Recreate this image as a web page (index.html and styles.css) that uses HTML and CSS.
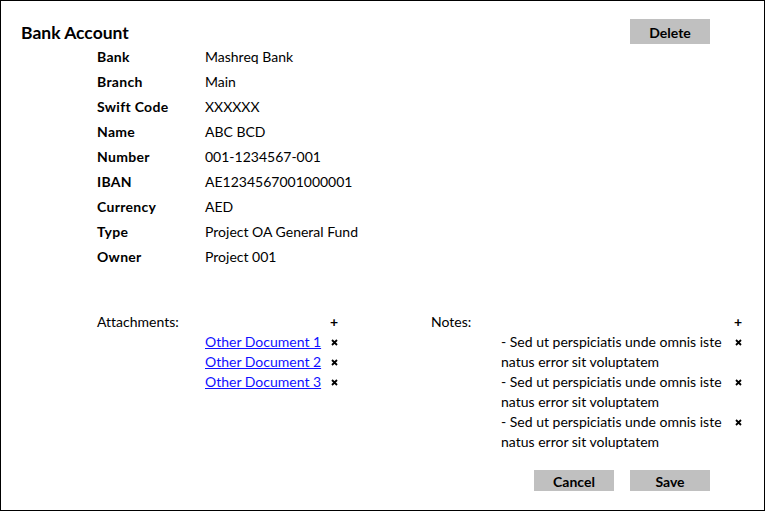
FILE: index.html
```html
<!DOCTYPE html>
<html>
<head>
<meta charset="utf-8">
<link rel="stylesheet" href="styles.css">
</head>
<body>
<div class="frame">
  <div class="header">
    <h1 class="title">Bank Account</h1>
    <button class="btn">Delete</button>
  </div>
  <div class="details">
    <div class="label">Bank</div><div class="value">Mashreq Bank</div>
    <div class="label">Branch</div><div class="value">Main</div>
    <div class="label">Swift Code</div><div class="value">XXXXXX</div>
    <div class="label">Name</div><div class="value">ABC BCD</div>
    <div class="label">Number</div><div class="value">001-1234567-001</div>
    <div class="label">IBAN</div><div class="value">AE1234567001000001</div>
    <div class="label">Currency</div><div class="value">AED</div>
    <div class="label">Type</div><div class="value">Project OA General Fund</div>
    <div class="label">Owner</div><div class="value">Project 001</div>
  </div>
  <div class="lower">
    <div class="panel attachments">
      <div class="panel-head"><span>Attachments:</span><span class="icon plus">+</span></div>
      <div class="item"><a href="#">Other Document 1</a><span class="icon x"><svg width="7" height="7" viewBox="0 0 7 7"><path d="M1 1L6 6M6 1L1 6" stroke="#000" stroke-width="1.8"/></svg></span></div>
      <div class="item"><a href="#">Other Document 2</a><span class="icon x"><svg width="7" height="7" viewBox="0 0 7 7"><path d="M1 1L6 6M6 1L1 6" stroke="#000" stroke-width="1.8"/></svg></span></div>
      <div class="item"><a href="#">Other Document 3</a><span class="icon x"><svg width="7" height="7" viewBox="0 0 7 7"><path d="M1 1L6 6M6 1L1 6" stroke="#000" stroke-width="1.8"/></svg></span></div>
    </div>
    <div class="panel notes">
      <div class="panel-head"><span>Notes:</span><span class="icon plus">+</span></div>
      <div class="item"><p>- Sed ut perspiciatis unde omnis iste natus error sit voluptatem</p><span class="icon x"><svg width="7" height="7" viewBox="0 0 7 7"><path d="M1 1L6 6M6 1L1 6" stroke="#000" stroke-width="1.8"/></svg></span></div>
      <div class="item"><p>- Sed ut perspiciatis unde omnis iste natus error sit voluptatem</p><span class="icon x"><svg width="7" height="7" viewBox="0 0 7 7"><path d="M1 1L6 6M6 1L1 6" stroke="#000" stroke-width="1.8"/></svg></span></div>
      <div class="item"><p>- Sed ut perspiciatis unde omnis iste natus error sit voluptatem</p><span class="icon x"><svg width="7" height="7" viewBox="0 0 7 7"><path d="M1 1L6 6M6 1L1 6" stroke="#000" stroke-width="1.8"/></svg></span></div>
    </div>
  </div>
  <div class="footer">
    <button class="btn small">Cancel</button>
    <button class="btn small">Save</button>
  </div>
</div>
</body>
</html>
```
FILE: styles.css
```css
* { box-sizing: border-box; }
html, body { margin: 0; padding: 0; background: #fff; }
body { font-family: Lato, "Liberation Sans", sans-serif; font-size: 14px; color: #000; font-variant-ligatures: none; }
.frame {
  width: 765px; height: 511px;
  border: 1px solid #000;
  display: flex; flex-direction: column;
  padding: 18px 20px 0 20px;
}
.header { display: flex; justify-content: space-between; align-items: flex-start; padding-right: 34px; }
.title { margin: 4px 0 0 0; font-size: 17.5px; font-weight: bold; line-height: 20px; }
.btn {
  font-family: inherit; font-size: 14px; font-weight: bold;
  background: #c0c0c0; border: 0; padding: 1px 0 0 0; margin: 0;
  width: 80px; height: 25px; color: #000;
}
.btn.small { height: 21px; }
.details {
  display: grid; grid-template-columns: 108px auto;
  margin: 0 0 0 76px;
  line-height: 25px;
}
.label { font-weight: bold; letter-spacing: 0.3px; }
.lower { display: flex; margin-top: 43px; padding-left: 76px; }
.panel { line-height: 20px; flex: none; }
.attachments { width: 243px; }
.notes { margin-left: 91px; width: 313px; }
.panel-head { display: flex; justify-content: space-between; }
.attachments .item { display: flex; justify-content: space-between; padding-left: 108px; align-items: center; }
.notes .item { display: flex; justify-content: space-between; padding-left: 70px; align-items: flex-start; }
.notes .item p { margin: 0; width: 231px; }
a { color: #1010ff; }
.icon { width: 12px; text-align: center; font-weight: bold; display: inline-flex; justify-content: center; }
.notes .icon.x { height: 20px; align-items: center; }
.plus { font-size: 14px; }
.footer { display: flex; justify-content: flex-end; gap: 16px; margin-top: auto; margin-bottom: 19px; padding-right: 34px; }
```
